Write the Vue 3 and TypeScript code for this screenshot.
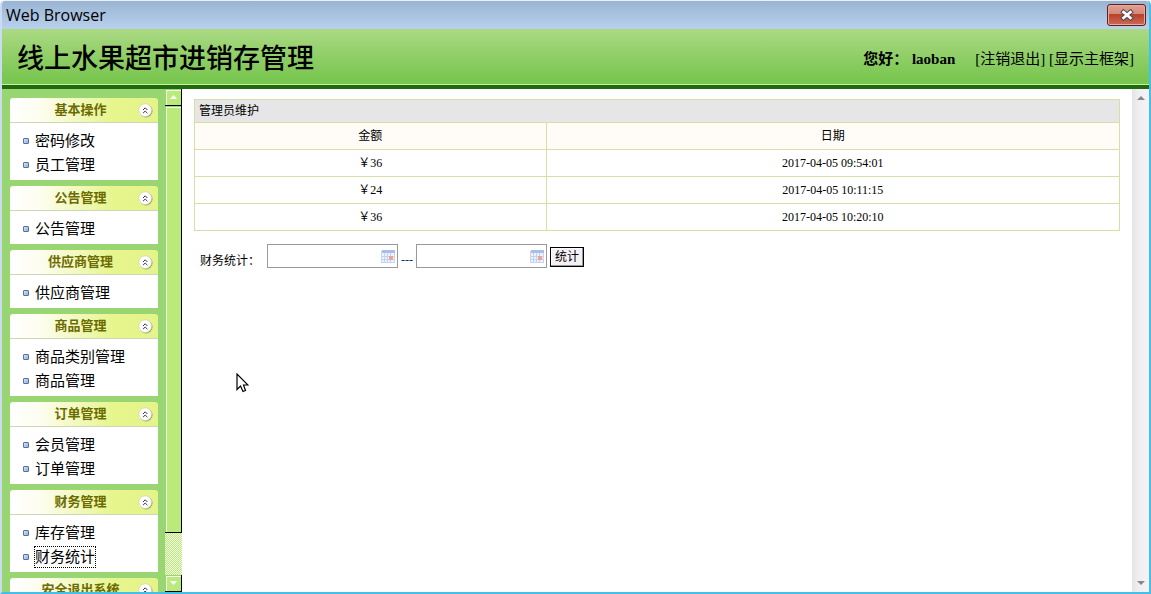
<script setup lang="ts">
import { ref } from 'vue'

interface MenuGroup {
  title: string
  items: string[]
}

interface FinanceRow {
  amount: string
  date: string
}

const groups: MenuGroup[] = [
  { title: '基本操作', items: ['密码修改', '员工管理'] },
  { title: '公告管理', items: ['公告管理'] },
  { title: '供应商管理', items: ['供应商管理'] },
  { title: '商品管理', items: ['商品类别管理', '商品管理'] },
  { title: '订单管理', items: ['会员管理', '订单管理'] },
  { title: '财务管理', items: ['库存管理', '财务统计'] },
  { title: '安全退出系统', items: [] },
]

const rows: FinanceRow[] = [
  { amount: '￥36', date: '2017-04-05 09:54:01' },
  { amount: '￥24', date: '2017-04-05 10:11:15' },
  { amount: '￥36', date: '2017-04-05 10:20:10' },
]

const current = ref('财务统计')
const startDate = ref('')
const endDate = ref('')
</script>

<template>
  <div class="window">
    <div class="titlebar">
      <span>Web Browser</span>
      <button class="close" type="button" aria-label="Close">
        <svg width="14" height="12" viewBox="0 0 14 12">
          <path d="M3.5 3 L10.5 9 M10.5 3 L3.5 9" stroke="#4b4f5c" stroke-width="4.6" stroke-linecap="square" />
          <path d="M3.5 3 L10.5 9 M10.5 3 L3.5 9" stroke="#ffffff" stroke-width="2.6" stroke-linecap="square" />
        </svg>
      </button>
    </div>

    <header class="banner">
      <h1>线上水果超市进销存管理</h1>
      <div class="user">
        <strong>您好： laoban</strong>
        <nav><a href="#logout">[注销退出]</a> <a href="#main">[显示主框架]</a></nav>
      </div>
    </header>

    <div class="frames">
      <aside class="sidebar">
        <section v-for="group in groups" :key="group.title" class="group">
          <h2>
            <span>{{ group.title }}</span>
            <button class="fold" type="button" :aria-label="group.title">
              <svg width="15" height="15" viewBox="0 0 15 15">
                <circle cx="8" cy="8" r="6.5" fill="#98a070" />
                <circle cx="7.2" cy="7.2" r="6.4" fill="#ffffff" stroke="#c9cdb4" stroke-width="0.6" />
                <path d="M5 7 L7.2 4.8 L9.4 7 M5 10.2 L7.2 8 L9.4 10.2" fill="none" stroke="#333" stroke-width="1" />
              </svg>
            </button>
          </h2>
          <ul>
            <li v-for="item in group.items" :key="item">
              <a :href="'#' + item" :class="{ focused: item === current }" @click="current = item">{{ item }}</a>
            </li>
          </ul>
        </section>
      </aside>

      <div class="green-scroll">
        <button class="arrow up" type="button" aria-label="Scroll up">
          <svg width="7" height="4" viewBox="0 0 7 4"><path d="M0 4 L3.5 0 L7 4 Z" fill="#fff" /></svg>
        </button>
        <div class="thumb"></div>
        <div class="track"></div>
        <button class="arrow" type="button" aria-label="Scroll down">
          <svg width="7" height="4" viewBox="0 0 7 4"><path d="M0 0 L3.5 4 L7 0 Z" fill="#fff" /></svg>
        </button>
      </div>

      <main class="content">
        <table>
          <colgroup>
            <col class="col-amount" />
            <col />
          </colgroup>
          <thead>
            <tr class="caption"><th colspan="2">管理员维护</th></tr>
            <tr class="head"><th>金额</th><th>日期</th></tr>
          </thead>
          <tbody>
            <tr v-for="row in rows" :key="row.date">
              <td>{{ row.amount }}</td>
              <td>{{ row.date }}</td>
            </tr>
          </tbody>
        </table>

        <form class="filter" @submit.prevent>
          <label for="start">财务统计：</label>
          <span class="date">
            <input id="start" v-model="startDate" type="text" />
            <svg width="15" height="13" viewBox="0 0 15 13">
              <rect x="0.5" y="1.5" width="13" height="11" fill="#edf3fd" stroke="#cbd6ee" />
              <rect x="1" y="0" width="13" height="3" fill="#a9bde8" />
              <path d="M1 6.5 H13 M1 9.5 H13 M3.5 3 V12 M6.5 3 V12 M9.5 3 V12" stroke="#c3d2f1" />
              <rect x="8" y="6" width="4" height="4" fill="#eba594" />
            </svg>
          </span>
          <span class="dash">---</span>
          <span class="date">
            <input v-model="endDate" type="text" aria-label="结束日期" />
            <svg width="15" height="13" viewBox="0 0 15 13">
              <rect x="0.5" y="1.5" width="13" height="11" fill="#edf3fd" stroke="#cbd6ee" />
              <rect x="1" y="0" width="13" height="3" fill="#a9bde8" />
              <path d="M1 6.5 H13 M1 9.5 H13 M3.5 3 V12 M6.5 3 V12 M9.5 3 V12" stroke="#c3d2f1" />
              <rect x="8" y="6" width="4" height="4" fill="#eba594" />
            </svg>
          </span>
          <button class="submit" type="submit">统计</button>
        </form>
      </main>

      <div class="gray-scroll">
        <svg width="8" height="4" viewBox="0 0 8 4"><path d="M0 4 L4 0 L8 4 Z" fill="#888" /></svg>
        <svg width="8" height="4" viewBox="0 0 8 4"><path d="M0 0 L4 4 L8 0 Z" fill="#888" /></svg>
      </div>
    </div>

    <svg class="pointer" width="13" height="20" viewBox="0 0 13 20">
      <path d="M1 1 V16.5 L4.5 13 L7 18.5 L9.5 17.5 L7.5 12 H12 Z" fill="#fff" stroke="#000" stroke-width="1.2" />
    </svg>
  </div>
</template>

<style>
body {
  margin: 0;
}
</style>

<style scoped>
.window {
  position: relative;
  box-sizing: border-box;
  height: 100vh;
  display: flex;
  flex-direction: column;
  overflow: hidden;
  border: solid #46bfe8;
  border-width: 1px 2px 2px;
  border-left-color: #c9dcf2;
  border-top-color: #e8f0fa;
  border-radius: 5px 5px 0 0;
  background: #fff;
  color: #000;
  font-family: "Liberation Serif", "Noto Sans CJK SC", serif;
  font-size: 12px;
}

a {
  color: inherit;
  text-decoration: none;
}

button {
  padding: 0;
  cursor: pointer;
}

.titlebar {
  flex: none;
  display: flex;
  align-items: center;
  justify-content: space-between;
  height: 28px;
  padding: 0 3px 0 4px;
  background: linear-gradient(#99b4d3, #b9d1ed);
  font: 16px/28px "Open Sans", sans-serif;
}

.close {
  box-sizing: border-box;
  display: flex;
  align-items: center;
  justify-content: center;
  width: 39px;
  height: 22px;
  border: 1px solid #5a2320;
  border-radius: 3px;
  box-shadow: inset 0 0 0 1px #e6aaa0;
  background: linear-gradient(#e0a091, #d58878 45%, #b8402a 46%, #cc6a55);
}

.banner {
  flex: none;
  display: flex;
  align-items: center;
  justify-content: space-between;
  height: 56px;
  padding: 0 15px;
  border-bottom: 4px solid #216a10;
  box-shadow: inset 0 -1px #c9f09a;
  background: linear-gradient(#abd983, #79c650 90%);
}

h1 {
  margin: 0;
  padding-top: 4px;
  font-size: 27px;
  line-height: 32px;
  font-weight: 500;
}

.user {
  display: flex;
  gap: 20px;
  padding-top: 4px;
  font-size: 15px;
  line-height: 20px;
}

.frames {
  flex: 1;
  min-height: 0;
  display: flex;
}

.sidebar {
  box-sizing: border-box;
  flex: none;
  display: flex;
  flex-direction: column;
  gap: 6px;
  width: 163px;
  padding: 9px 7px 0 8px;
  overflow: hidden;
  background: #9ad573;
}

.group {
  flex: none;
}

h2 {
  display: flex;
  align-items: center;
  height: 24px;
  margin: 0;
  padding-right: 5px;
  border-bottom: 1px solid #d0d5b8;
  border-radius: 3px 3px 0 0;
  background: linear-gradient(90deg, #fff, #fdfdf0 20%, #e6f58c 70%, #e4f48a);
  color: #6b6b00;
  font-size: 13px;
  font-weight: 700;
}

h2 span {
  flex: 1;
  padding: 0 0 4px 13px;
  text-align: center;
}

.fold {
  display: flex;
  border: 0;
  background: none;
}

ul {
  margin: 0;
  padding: 6px 0 3px 13px;
  background: #fff;
  list-style: none;
}

li {
  display: flex;
  align-items: center;
  gap: 6px;
  height: 24px;
  font-size: 15px;
  line-height: 20px;
}

li::before {
  content: "";
  width: 4px;
  height: 4px;
  border: 1px solid #5f6f8c;
  border-radius: 1px;
  background: linear-gradient(135deg, #d4e6ff, #7fb0ee);
}

.focused {
  outline: 1px dotted #000;
}

.green-scroll {
  flex: none;
  display: flex;
  flex-direction: column;
  width: 17px;
}

.arrow,
.thumb {
  box-sizing: border-box;
  border: solid #000;
  border-width: 0 1px 1px 0;
  background: #baea7a;
  box-shadow: inset 1px 1px #9ad573, inset 2px 2px #f4ffe4;
}

.arrow {
  flex: none;
  display: flex;
  align-items: center;
  justify-content: center;
  height: 17px;
}

.thumb {
  flex: 427;
}

.track {
  flex: 42;
  background: repeating-conic-gradient(#baea7a 0 25%, #f4ffe4 0 50%) 0 0 / 2px 2px;
}

.content {
  flex: 1;
  min-width: 0;
  padding: 10px 12px;
}

table {
  width: 100%;
  table-layout: fixed;
  border-collapse: collapse;
  line-height: 16px;
}

.col-amount {
  width: 38%;
}

th,
td {
  height: 26px;
  padding: 0;
  border: 1px solid #d5dfa8;
  font-weight: 400;
  text-align: center;
}

.caption th {
  height: 22px;
  padding-left: 4px;
  background: #e6e6e6;
  text-align: left;
}

.head {
  background: #fffcf7;
}

.filter {
  display: flex;
  align-items: center;
  gap: 3px;
  padding: 12px 6px;
}

.filter label {
  padding: 8px 4px 0 0;
}

.date {
  box-sizing: border-box;
  display: flex;
  align-items: center;
  width: 131px;
  height: 24px;
  padding-right: 1px;
  border: 1px solid #999;
}

.date input {
  flex: 1;
  min-width: 0;
  height: 20px;
  padding: 0 2px;
  border: 0;
  outline: 0;
  background: none;
  font: inherit;
}

.date svg {
  flex: none;
}

.dash {
  padding-top: 8px;
  color: #003366;
}

.submit {
  height: 20px;
  width: 34px;
  margin-top: 2px;
  border: 1px solid #000;
  box-shadow: inset -1px -1px #999, inset 1px 1px #fff;
  background: #f5f0f5;
  color: #000;
  font: inherit;
  line-height: 16px;
}

.gray-scroll {
  flex: none;
  display: flex;
  flex-direction: column;
  align-items: center;
  justify-content: space-between;
  width: 17px;
  padding: 7px 0;
  box-sizing: border-box;
  background: linear-gradient(90deg, #e6e3e6, #efeff1 40%, #f6f2f7);
}

.pointer {
  position: absolute;
  left: 234px;
  top: 372px;
}
</style>
